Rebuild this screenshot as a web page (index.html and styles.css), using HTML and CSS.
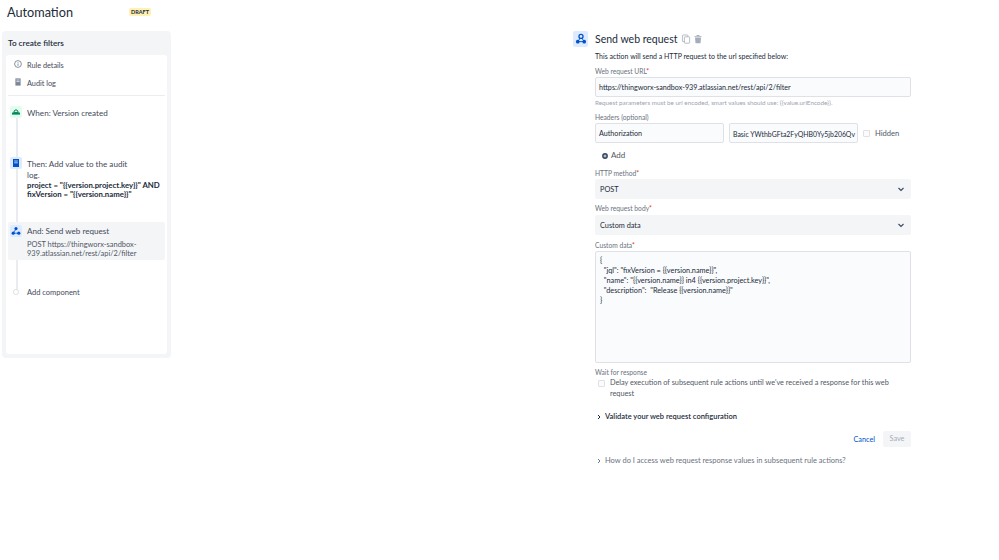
FILE: index.html
```html
<!DOCTYPE html>
<html lang="en">
<head>
    <meta charset="UTF-8">
    <title>Automation</title>
    <link rel="stylesheet" href="styles.css">
</head>
<body>
    <div class="page">
        <div class="left">
            <div class="top">
                <h1>Automation</h1>
                <span class="draft">DRAFT</span>
            </div>
            <div class="rule-panel">
                <h3>To create filters</h3>
                <div class="rule-card">
                    <div class="meta-row">
                        <svg class="meta-icon" viewBox="0 0 10 10"><circle cx="5" cy="5" r="3.4" fill="none" stroke="#6b778c" stroke-width="0.8"/><path d="M5 4.4v2.4M5 3v.7" stroke="#6b778c" stroke-width="0.8"/></svg>
                        <span>Rule details</span>
                    </div>
                    <div class="meta-row">
                        <svg class="meta-icon" viewBox="0 0 10 10"><rect x="2.4" y="1.4" width="5.2" height="7.2" fill="#7a869a"/><path d="M3.4 3h3.2M3.4 4.6h3.2" stroke="#fff" stroke-width="0.7"/></svg>
                        <span>Audit log</span>
                    </div>
                    <div class="divider"></div>
                    <div class="steps">
                        <div class="step step-when">
                            <span class="step-icon green">
                                <svg viewBox="0 0 12 12"><path d="M3.6 6.4 5 4h2l1.4 2.4z" fill="none" stroke="#00875a" stroke-width="1"/><rect x="2" y="6.6" width="8" height="2" fill="#00875a"/></svg>
                            </span>
                            <div class="step-text">When: Version created</div>
                        </div>
                        <div class="step step-then">
                            <span class="step-icon blue">
                                <svg viewBox="0 0 12 12"><rect x="3" y="2" width="6" height="8" fill="#0052cc"/><path d="M4.2 4h3.6M4.2 5.8h3.6" stroke="#deebff" stroke-width="0.8"/></svg>
                            </span>
                            <div class="step-text">
                                <div class="step-title">Then: Add value to the audit log.</div>
                                <div class="step-bold">project = "{{version.project.key}}" AND fixVersion = "{{version.name}}"</div>
                            </div>
                        </div>
                        <div class="step step-and">
                            <span class="step-icon blue">
                                <svg viewBox="0 0 12 12"><circle cx="6" cy="3.6" r="1.6" fill="#0052cc"/><circle cx="3.2" cy="8.2" r="1.6" fill="#0052cc"/><circle cx="8.8" cy="8.2" r="1.6" fill="#0052cc"/><path d="M6 4 3.2 8.2h5.6" fill="none" stroke="#0052cc" stroke-width="0.8"/></svg>
                            </span>
                            <div class="step-text">
                                And: Send web request
                                <div class="step-sub">POST https://thingworx-sandbox-939.atlassian.net/rest/api/2/filter</div>
                            </div>
                        </div>
                        <div class="step step-add">
                            <span class="step-dot"></span>
                            <div class="step-text">Add component</div>
                        </div>
                    </div>
                </div>
            </div>
        </div>

        <div class="right">
            <div class="action-head">
                <span class="action-icon">
                    <svg viewBox="0 0 16 16"><circle cx="8" cy="5" r="2.3" fill="none" stroke="#0052cc" stroke-width="1.5"/><circle cx="4.3" cy="11" r="2.1" fill="#0052cc"/><circle cx="11.7" cy="11" r="2.1" fill="#0052cc"/><path d="M7 7 4.3 11h7.4L9 7" fill="none" stroke="#0052cc" stroke-width="1.1"/></svg>
                </span>
                <h2>Send web request</h2>
                <svg class="head-icon" viewBox="0 0 10 10"><rect x="1.4" y="1" width="5.4" height="6.6" rx="0.6" fill="none" stroke="#a5adba" stroke-width="0.8"/><rect x="3.4" y="2.8" width="5.2" height="6.4" rx="0.6" fill="#fff" stroke="#a5adba" stroke-width="0.8"/></svg>
                <svg class="head-icon" viewBox="0 0 10 10"><path d="M1.4 2.2h7.2v.8H1.4zM3.6 1h2.8v1H3.6zM2 3.4h6l-.5 5.8h-5z" fill="#a5adba"/></svg>
            </div>
            <div class="form">
                <p class="intro">This action will send a HTTP request to the url specified below:</p>

                <label class="lbl lbl-url">Web request URL<em>*</em></label>
                <div class="field">https://thingworx-sandbox-939.atlassian.net/rest/api/2/filter</div>
                <p class="help">Request parameters must be url encoded, smart values should use: {{value.urlEncode}}.</p>

                <label class="lbl lbl-headers">Headers (optional)</label>
                <div class="header-row">
                    <div class="field field-head">Authorization</div>
                    <div class="field field-head field-key">Basic YWthbGFta2FyQHB0Yy5jb206Qv</div>
                    <span class="check"></span>
                    <span class="hidden-text">Hidden</span>
                </div>
                <div class="add-row">
                    <svg class="add-icon" viewBox="0 0 10 10"><circle cx="5" cy="5" r="3.6" fill="#344563"/><path d="M5 3.2v3.6M3.2 5h3.6" stroke="#fff" stroke-width="1"/></svg>
                    <span>Add</span>
                </div>

                <label class="lbl lbl-method">HTTP method<em>*</em></label>
                <div class="select">
                    <span>POST</span>
                    <svg class="chevron" viewBox="0 0 8 8"><path d="M1.5 3 4 5.4 6.5 3" fill="none" stroke="#344563" stroke-width="1.1"/></svg>
                </div>

                <label class="lbl lbl-body">Web request body<em>*</em></label>
                <div class="select">
                    <span>Custom data</span>
                    <svg class="chevron" viewBox="0 0 8 8"><path d="M1.5 3 4 5.4 6.5 3" fill="none" stroke="#344563" stroke-width="1.1"/></svg>
                </div>

                <label class="lbl lbl-custom">Custom data<em>*</em></label>
                <pre class="code">{
  "jql": "fixVersion = {{version.name}}",
  "name": "{{version.name}} in4 {{version.project.key}}",
  "description":  "Release {{version.name}}"
}</pre>

                <label class="lbl lbl-wait">Wait for response</label>
                <div class="wait-row">
                    <span class="check"></span>
                    <span>Delay execution of subsequent rule actions until we've received a response for this web request</span>
                </div>

                <div class="expand expand-validate">
                    <svg class="caret" viewBox="0 0 6 8"><path d="M2 2 4 4 2 6" fill="none" stroke="#172b4d" stroke-width="1"/></svg>
                    <span>Validate your web request configuration</span>
                </div>

                <div class="actions">
                    <span class="cancel">Cancel</span>
                    <span class="save">Save</span>
                </div>

                <div class="expand expand-how">
                    <svg class="caret" viewBox="0 0 6 8"><path d="M2 2 4 4 2 6" fill="none" stroke="#6b778c" stroke-width="1"/></svg>
                    <span>How do I access web request response values in subsequent rule actions?</span>
                </div>
            </div>
        </div>
    </div>
</body>
</html>
```

FILE: styles.css
```css
html, body {
    margin: 0;
    padding: 0;
}
body {
    font-family: Lato, "Open Sans", sans-serif;
    font-size: 7.3px;
    line-height: 11px;
    color: #222b3a;
    background-color: #fff;
}
.page {
    display: flex;
    align-items: flex-start;
    width: 999px;
    height: 560px;
    overflow: hidden;
}

/* left column */
.left {
    width: 169px;
    margin-left: 2px;
}
.top {
    display: flex;
    align-items: flex-start;
    height: 31px;
}
.top h1 {
    margin: 3px 0 0 5px;
    width: 122px;
    font-size: 12.7px;
    line-height: 18px;
    font-weight: 400;
}
.draft {
    margin-top: 8px;
    padding: 0 2px;
    height: 8px;
    background-color: #fff0b3;
    border-radius: 2px;
    font-size: 5.5px;
    line-height: 8px;
    font-weight: 700;
    color: #222b3a;
}
.rule-panel {
    box-sizing: border-box;
    height: 327px;
    padding: 6px 4px 4px;
    background-color: #f4f5f7;
    border-radius: 4px;
}
.rule-panel h3 {
    margin: 0 0 6px 2px;
    height: 12px;
    font-size: 8.2px;
    line-height: 12px;
    font-weight: 600;
}
.rule-card {
    height: 299px;
    box-sizing: border-box;
    background-color: #fff;
    border-radius: 3px;
}
.meta-row {
    display: flex;
    align-items: center;
    height: 18px;
    padding-left: 7px;
    gap: 4px;
    color: #444b59;
}
.meta-row span {
    padding-top: 2px;
}
.meta-row:first-child {
    margin-top: 2px;
}
.meta-icon {
    width: 10px;
    height: 10px;
}
.divider {
    height: 1px;
    margin: 4px 2px 0;
    background-color: #ebecf0;
}
.steps {
    position: relative;
    padding-top: 10px;
}
.steps::before {
    content: "";
    position: absolute;
    left: 10px;
    top: 22px;
    width: 2px;
    height: 172px;
    background-color: #ebecf0;
}
.step {
    position: relative;
    display: flex;
    gap: 5px;
    padding-left: 4px;
    padding-right: 4px;
}
.step-icon {
    flex: none;
    display: flex;
    width: 12px;
    height: 12px;
    border-radius: 2px;
}
.step-icon svg {
    width: 12px;
    height: 12px;
}
.green {
    background-color: #e3fcef;
}
.blue {
    background-color: #deebff;
}
.step-text {
    padding-top: 2px;
    font-size: 8.1px;
    color: #444b59;
}
.step-when {
    height: 51px;
}
.step-then {
    height: 65px;
}
.step-title {
    width: 112px;
}
.step-bold {
    width: 140px;
    font-size: 7.8px;
    font-weight: 700;
    color: #222b3a;
    line-height: 9px;
}
.step-and {
    box-sizing: border-box;
    margin: 0 2px;
    padding: 3px 2px 0;
    height: 38px;
    background-color: #f4f5f7;
    border-radius: 2px;
}
.step-and .step-text {
    padding-top: 1px;
}
.step-sub {
    margin-top: 4px;
    font-size: 7.45px;
    line-height: 8.5px;
    color: #505765;
}
.step-add {
    margin-top: 26px;
}
.step-add .step-text {
    padding-top: 1px;
    font-size: 7.5px;
}
.step-dot {
    flex: none;
    width: 4px;
    height: 4px;
    margin: 3px 3px 0;
    border: 1px solid #dfe1e6;
    border-radius: 50%;
    background-color: #fff;
}

/* right column */
.right {
    width: 340px;
    margin-left: 402px;
    padding-top: 31px;
}
.action-head {
    display: flex;
    align-items: center;
    height: 16px;
}
.action-head h2 {
    margin: 0 4px 0 7px;
    font-size: 10.5px;
    line-height: 16px;
    font-weight: 400;
}
.action-icon {
    width: 15px;
    height: 16px;
    display: flex;
    align-items: center;
    justify-content: center;
    background-color: #deebff;
    border-radius: 2px;
}
.action-icon svg {
    width: 14px;
    height: 14px;
}
.head-icon {
    width: 10px;
    height: 10px;
    margin-right: 2px;
}
.form {
    width: 316px;
    margin-left: 22px;
}
.intro {
    margin: 4px 0 0;
    font-size: 7px;
    line-height: 11px;
}
.lbl {
    display: block;
    font-size: 6.7px;
    line-height: 8px;
    color: #6b7280;
}
.lbl em {
    font-style: normal;
    color: #de350b;
}
.lbl-url {
    margin-top: 5px;
    margin-bottom: 2px;
}
.field {
    box-sizing: border-box;
    height: 20px;
    padding: 0 3px;
    border: 1px solid #dfe1e6;
    border-radius: 2px;
    background-color: #fafbfc;
    font-size: 7.2px;
    line-height: 20px;
    white-space: nowrap;
    overflow: hidden;
}
.help {
    margin: 1px 0 0;
    font-size: 6.3px;
    line-height: 9px;
    color: #9ca3af;
}
.lbl-headers {
    margin-top: 6px;
    margin-bottom: 2px;
}
.header-row {
    display: flex;
    align-items: center;
}
.field-head {
    width: 129px;
    margin-right: 5px;
    padding: 0 3px;
}
.field-key {
    font-size: 6.9px;
}
.check {
    flex: none;
    box-sizing: border-box;
    width: 7px;
    height: 7px;
    border: 1px solid #dfe1e6;
    border-radius: 1px;
    background-color: #fafbfc;
}
.hidden-text {
    margin-left: 5px;
    font-size: 7.6px;
    color: #505765;
}
.add-row {
    display: flex;
    align-items: center;
    gap: 2px;
    height: 11px;
    margin-top: 7px;
    padding-left: 6px;
    font-size: 8px;
    color: #505765;
}
.add-icon {
    width: 8px;
    height: 8px;
}
.select {
    display: flex;
    justify-content: space-between;
    align-items: center;
    box-sizing: border-box;
    height: 20px;
    padding: 0 6px 0 5px;
    background-color: #f4f5f7;
    border-radius: 2px;
}
.chevron {
    width: 8px;
    height: 8px;
}
.lbl-method {
    margin-top: 8px;
    margin-bottom: 2px;
}
.lbl-body {
    margin-top: 5px;
    margin-bottom: 3px;
}
.lbl-custom {
    margin-top: 6px;
    margin-bottom: 2px;
}
.code {
    box-sizing: border-box;
    height: 112px;
    margin: 0;
    padding: 4px 4px;
    border: 1px solid #dfe1e6;
    border-radius: 2px;
    background-color: #fafbfc;
    font-family: inherit;
    font-size: 7.3px;
    line-height: 10px;
}
.lbl-wait {
    margin-top: 5px;
}
.wait-row {
    display: flex;
    gap: 5px;
    padding-left: 3px;
    margin-top: 1px;
    line-height: 11px;
    color: #505765;
}
.wait-row .check {
    margin-top: 3px;
}
.expand {
    display: flex;
    align-items: center;
    gap: 3px;
    padding-left: 1px;
}
.caret {
    width: 6px;
    height: 8px;
}
.expand-validate {
    margin-top: 12px;
    font-size: 7.5px;
    font-weight: 600;
}
.actions {
    display: flex;
    justify-content: flex-end;
    align-items: center;
    gap: 8px;
    margin-top: 9px;
}
.cancel {
    color: #0052cc;
}
.save {
    width: 28px;
    height: 16px;
    line-height: 16px;
    text-align: center;
    border-radius: 2px;
    background-color: #f4f5f7;
    color: #a5adba;
}
.expand-how {
    margin-top: 8px;
    font-size: 7.5px;
    color: #6b7280;
}
```
